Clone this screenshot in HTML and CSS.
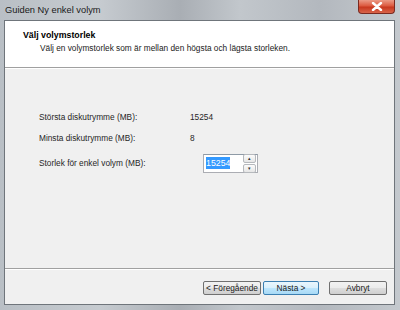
FILE: index.html
```html
<!DOCTYPE html>
<html lang="sv">
<head>
    <meta charset="UTF-8">
    <title>Guiden Ny enkel volym</title>
    <link rel="stylesheet" href="styles.css">
</head>
<body>
    <div class="window">
        <div class="titlebar">
            <span class="title">Guiden Ny enkel volym</span>
            <div class="close">
                <svg width="12" height="9" viewBox="0 0 12 9">
                    <path d="M2 1 L10 8 M10 1 L2 8" stroke="#fff" stroke-width="2.4" stroke-linecap="round"/>
                </svg>
            </div>
        </div>
        <div class="client">
            <div class="header">
                <div class="heading">Välj volymstorlek</div>
                <div class="subheading">Välj en volymstorlek som är mellan den högsta och lägsta storleken.</div>
            </div>
            <div class="content">
                <div class="row">
                    <span class="label">Största diskutrymme (MB):</span>
                    <span class="value">15254</span>
                </div>
                <div class="row">
                    <span class="label">Minsta diskutrymme (MB):</span>
                    <span class="value">8</span>
                </div>
                <div class="row size-row">
                    <span class="label">Storlek för enkel volym (MB):</span>
                    <div class="spin">
                        <span class="spin-text"><span class="selected">15254</span></span>
                        <div class="spin-buttons">
                            <div class="spin-btn">&#9652;</div>
                            <div class="spin-btn">&#9662;</div>
                        </div>
                    </div>
                </div>
            </div>
            <div class="footer">
                <button class="btn">&lt; Föregående</button>
                <button class="btn default">Nästa &gt;</button>
                <button class="btn cancel">Avbryt</button>
            </div>
        </div>
    </div>
</body>
</html>
```
FILE: styles.css
```css
html, body {
    margin: 0;
    padding: 0;
}
body {
    width: 400px;
    height: 310px;
    overflow: hidden;
    font-family: "Liberation Sans", Arial, sans-serif;
    font-size: 8.3px;
    color: #262626;
    background: linear-gradient(90deg, #b9bfc5 0%, #c6cbd0 25%, #a9aeb4 45%, #c2c7cc 60%, #b3b8be 80%, #c4c9ce 100%);
}
.window {
    height: 310px;
    display: flex;
    flex-direction: column;
}
.titlebar {
    height: 20px;
    display: flex;
    align-items: flex-start;
    justify-content: space-between;
}
.title {
    margin: 5px 0 0 5px;
    font-size: 9.3px;
    color: #1a1a1a;
}
.close {
    width: 37px;
    height: 14px;
    margin-right: 5px;
    box-sizing: border-box;
    border: 1px solid #7a2a20;
    border-top: none;
    border-radius: 0 0 4px 4px;
    background: linear-gradient(#eb9a86 0%, #dc5a40 45%, #c8381f 55%, #d8644a 100%);
    display: flex;
    align-items: center;
    justify-content: center;
}
.client {
    flex: 1;
    margin: 0 5px 5px 4px;
    border: 1px solid #6f757b;
    background: #f0f0f0;
    display: flex;
    flex-direction: column;
}
.header {
    height: 47px;
    background: #fff;
    border-bottom: 1px solid #a0a0a0;
    box-shadow: 0 1px 0 #fff;
    box-sizing: border-box;
    padding: 9px 0 0 18px;
}
.heading {
    font-weight: bold;
    font-size: 8.8px;
    color: #000;
}
.subheading {
    margin: 3px 0 0 17px;
    color: #222;
}
.content {
    flex: 1;
    padding: 44px 0 0 34px;
    display: flex;
    flex-direction: column;
    gap: 11px;
}
.row {
    display: flex;
    align-items: center;
    height: 10px;
}
.size-row {
    margin-top: 4px;
}
.label {
    width: 151px;
}
.spin {
    display: flex;
    align-items: center;
    margin-left: 13px;
    width: 55px;
    height: 19px;
    box-sizing: border-box;
    border: 1px solid #abadb3;
    border-top-color: #8e9aa6;
    background: #fff;
}
.spin-text {
    flex: 1;
    padding-left: 2px;
    font-size: 8.8px;
}
.selected {
    background: #3399ff;
    color: #fff;
    padding: 1px 0;
}
.spin-buttons {
    display: flex;
    flex-direction: column;
    gap: 1px;
    margin-right: 1px;
}
.spin-btn {
    width: 11px;
    height: 7px;
    font-size: 5px;
    line-height: 7px;
    text-align: center;
    color: #333;
    border: 1px solid #b6b9bd;
    border-radius: 2px;
    background: linear-gradient(#fcfcfc, #e6e6e6);
}
.footer {
    height: 36px;
    border-top: 1px solid #a0a0a0;
    box-shadow: inset 0 1px 0 #fff;
    display: flex;
    align-items: center;
    padding: 2px 7px 0 0;
    box-sizing: border-box;
    justify-content: flex-end;
}
.btn {
    font-family: inherit;
    font-size: 8.3px;
    color: #1a1a1a;
    height: 14px;
    padding: 0;
    width: 58px;
    border: 1px solid #707070;
    border-radius: 2px;
    background: linear-gradient(#f2f2f2 0%, #ebebeb 50%, #dddddd 51%, #cfcfcf 100%);
}
.btn.default {
    width: 56px;
    margin-left: 2px;
    border-color: #3c7fb1;
    background: linear-gradient(#eaf6fd 0%, #d9f0fc 50%, #bee6fd 51%, #a7d9f5 100%);
}
.cancel {
    margin-left: 10px;
}
```
